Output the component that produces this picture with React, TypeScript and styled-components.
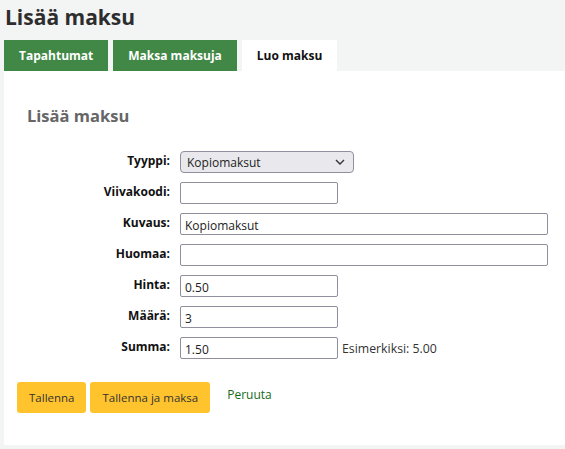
import styled, { createGlobalStyle } from "styled-components";

const GlobalStyle = createGlobalStyle`
  html, body {
    margin: 0;
    padding: 0;
    background: #f3f4f4;
    font-family: "Open Sans", "Noto Sans", sans-serif;
    color: #222;
  }
`;

const StyledPage = styled.div`
  padding: 0 0 4px 4px;
`;

const StyledPageTitle = styled.h1`
  margin: 0;
  padding: 2px 1px 0;
  height: 38px;
  font-size: 21px;
  font-weight: 700;
  color: #2d2d2d;
  line-height: 30px;
`;

const StyledTabBar = styled.div`
  display: flex;
  gap: 5px;
`;

const StyledTab = styled.div<{ $active?: boolean }>`
  height: 31px;
  display: flex;
  align-items: center;
  padding: 0 15px;
  font-size: 12px;
  font-weight: 700;
  background: ${({ $active }) => ($active ? "#fff" : "#418745")};
  color: ${({ $active }) => ($active ? "#111" : "#fff")};
`;

const StyledPanel = styled.div`
  background: #fff;
  height: 374px;
  padding: 33px 0 0;
  box-sizing: border-box;
`;

const StyledHeading = styled.h2`
  margin: 0 0 23px 23px;
  font-size: 16.5px;
  font-weight: 700;
  color: #666;
  line-height: 24px;
`;

const StyledForm = styled.div`
  display: grid;
  grid-template-columns: 166px 1fr;
  column-gap: 10px;
  row-gap: 9px;
`;

const StyledLabel = styled.label`
  text-align: right;
  font-size: 12px;
  font-weight: 700;
  color: #111;
  line-height: 19px;
`;

const StyledField = styled.div`
  display: flex;
  align-items: center;
  gap: 4px;
`;

const StyledInput = styled.input<{ $width: number }>`
  box-sizing: border-box;
  width: ${({ $width }) => $width}px;
  height: 22px;
  border: 1px solid #8f8f9d;
  border-radius: 2px;
  padding: 2px 4px 0;
  font-family: inherit;
  font-size: 12px;
  color: #222;
  background: #fff;
`;

const StyledSelect = styled.div`
  box-sizing: border-box;
  width: 174px;
  height: 22px;
  border: 1px solid #8f8f9d;
  border-radius: 4px;
  background: #e9e9ed;
  display: flex;
  align-items: center;
  justify-content: space-between;
  padding: 0 8px 0 6px;
  font-size: 12px;
  color: #222;
`;

const StyledHint = styled.span`
  font-size: 12.3px;
  color: #333;
`;

const StyledActions = styled.div`
  display: flex;
  align-items: center;
  gap: 4px;
  margin: 23px 0 0 13px;
`;

const StyledButton = styled.button`
  height: 31px;
  padding: 0 12px;
  border: none;
  border-radius: 3px;
  background: #ffc42d;
  font-family: inherit;
  font-size: 11.5px;
  color: #333;
`;

const StyledCancel = styled.a`
  margin: -6px 0 0 13px;
  font-size: 12px;
  color: #176b17;
  text-decoration: none;
`;

const Chevron = () => (
  <svg width="10" height="6" viewBox="0 0 10 6" fill="none">
    <path d="M1 1l4 4 4-4" stroke="#333" strokeWidth="1.4" />
  </svg>
);

export default function App() {
  return (
    <>
      <GlobalStyle />
      <StyledPage>
        <StyledPageTitle>Lisää maksu</StyledPageTitle>
        <StyledTabBar>
          <StyledTab>Tapahtumat</StyledTab>
          <StyledTab>Maksa maksuja</StyledTab>
          <StyledTab $active>Luo maksu</StyledTab>
        </StyledTabBar>
        <StyledPanel>
          <StyledHeading>Lisää maksu</StyledHeading>
          <StyledForm>
            <StyledLabel>Tyyppi:</StyledLabel>
            <StyledField>
              <StyledSelect>
                <span>Kopiomaksut</span>
                <Chevron />
              </StyledSelect>
            </StyledField>
            <StyledLabel>Viivakoodi:</StyledLabel>
            <StyledField>
              <StyledInput $width={158} defaultValue="" />
            </StyledField>
            <StyledLabel>Kuvaus:</StyledLabel>
            <StyledField>
              <StyledInput $width={368} defaultValue="Kopiomaksut" />
            </StyledField>
            <StyledLabel>Huomaa:</StyledLabel>
            <StyledField>
              <StyledInput $width={368} defaultValue="" />
            </StyledField>
            <StyledLabel>Hinta:</StyledLabel>
            <StyledField>
              <StyledInput $width={158} defaultValue="0.50" />
            </StyledField>
            <StyledLabel>Määrä:</StyledLabel>
            <StyledField>
              <StyledInput $width={158} defaultValue="3" />
            </StyledField>
            <StyledLabel>Summa:</StyledLabel>
            <StyledField>
              <StyledInput $width={158} defaultValue="1.50" />
              <StyledHint>Esimerkiksi: 5.00</StyledHint>
            </StyledField>
          </StyledForm>
          <StyledActions>
            <StyledButton>Tallenna</StyledButton>
            <StyledButton>Tallenna ja maksa</StyledButton>
            <StyledCancel href="#">Peruuta</StyledCancel>
          </StyledActions>
        </StyledPanel>
      </StyledPage>
    </>
  );
}
